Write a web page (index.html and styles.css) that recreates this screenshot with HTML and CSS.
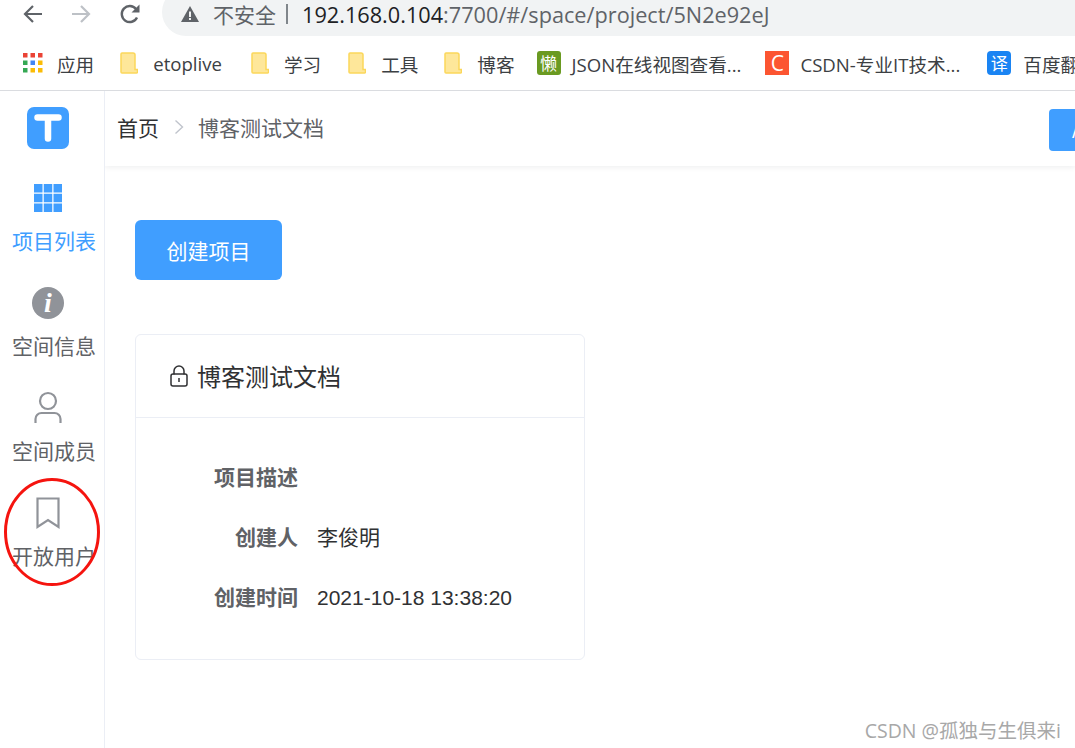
FILE: index.html
```html
<!DOCTYPE html>
<html lang="zh">
<head>
<meta charset="utf-8">
<title>博客测试文档</title>
<link rel="stylesheet" href="styles.css">
</head>
<body>
<div class="chrome">
  <div class="toolbar">
    <svg class="nav nav-back" viewBox="0 0 20 20"><path d="M19 10H2.500M10 2 2 10l8 8" fill="none" stroke="#5f6368" stroke-width="2.200"/></svg>
    <svg class="nav nav-fwd" viewBox="0 0 20 20"><path d="M1 10h16.500M10 2l8 8-8 8" fill="none" stroke="#bdc1c6" stroke-width="2.200"/></svg>
    <svg class="nav nav-reload" viewBox="0 0 22 22"><path d="M18 14.500A8 8 0 1 1 17 6" fill="none" stroke="#5f6368" stroke-width="2.400"/><path d="M20.500 1.500v8h-8z" fill="#5f6368"/></svg>
    <div class="omnibox">
      <svg class="warn" viewBox="0 0 18 16"><path d="M9 0l9 16H0z" fill="#5f6368"/><path d="M8 5.500h2v5.500H8zM8 12h2v2H8z" fill="#f1f3f4"/></svg>
      <span class="insecure">不安全</span>
      <span class="sep"></span>
      <span class="url"><span class="host">192.168.0.104</span>:7700/#/space/project/5N2e92eJ</span>
    </div>
  </div>
  <div class="bookmarks">
    <div class="bm">
      <svg class="apps" viewBox="0 0 20 20">
        <rect x="0" y="0" width="4.500" height="4.500" fill="#ea4335"/><rect x="7.500" y="0" width="4.500" height="4.500" fill="#ea4335"/><rect x="15" y="0" width="4.500" height="4.500" fill="#ea4335"/>
        <rect x="0" y="7.500" width="4.500" height="4.500" fill="#34a853"/><rect x="7.500" y="7.500" width="4.500" height="4.500" fill="#4285f4"/><rect x="15" y="7.500" width="4.500" height="4.500" fill="#fbbc05"/>
        <rect x="0" y="15" width="4.500" height="4.500" fill="#34a853"/><rect x="7.500" y="15" width="4.500" height="4.500" fill="#fbbc05"/><rect x="15" y="15" width="4.500" height="4.500" fill="#fbbc05"/>
      </svg>
      <span>应用</span>
    </div>
    <div class="bm gap-26"><svg class="folder" viewBox="0 0 18 22"><path d="M2 1h11a2 2 0 0 1 2 2v14.500h2.500V20a1 1 0 0 1-1 1H2a1 1 0 0 1-1-1V2a1 1 0 0 1 1-1z" fill="#fee79a" stroke="#fbd75b" stroke-width="1.500"/></svg><span>etoplive</span></div>
    <div class="bm gap-29"><svg class="folder" viewBox="0 0 18 22"><path d="M2 1h11a2 2 0 0 1 2 2v14.500h2.500V20a1 1 0 0 1-1 1H2a1 1 0 0 1-1-1V2a1 1 0 0 1 1-1z" fill="#fee79a" stroke="#fbd75b" stroke-width="1.500"/></svg><span>学习</span></div>
    <div class="bm gap-27"><svg class="folder" viewBox="0 0 18 22"><path d="M2 1h11a2 2 0 0 1 2 2v14.500h2.500V20a1 1 0 0 1-1 1H2a1 1 0 0 1-1-1V2a1 1 0 0 1 1-1z" fill="#fee79a" stroke="#fbd75b" stroke-width="1.500"/></svg><span>工具</span></div>
    <div class="bm gap-26"><svg class="folder" viewBox="0 0 18 22"><path d="M2 1h11a2 2 0 0 1 2 2v14.500h2.500V20a1 1 0 0 1-1 1H2a1 1 0 0 1-1-1V2a1 1 0 0 1 1-1z" fill="#fee79a" stroke="#fbd75b" stroke-width="1.500"/></svg><span>博客</span></div>
    <div class="bm gap-22"><span class="fav fav-lan">懒</span><span>JSON在线视图查看...</span></div>
    <div class="bm gap-24"><span class="fav fav-c">C</span><span>CSDN-专业IT技术...</span></div>
    <div class="bm gap-27"><span class="fav fav-yi">译</span><span>百度翻译</span></div>
  </div>
</div>

<div class="app">
  <aside class="sidebar">
    <div class="logo"><svg viewBox="0 0 42 42"><path d="M10.500 10.500h21M21 10.500v21" fill="none" stroke="#fff" stroke-width="6.500" stroke-linecap="round"/></svg></div>
    <nav class="menu">
      <a class="item active">
        <svg class="icon" viewBox="0 0 28 28" fill="#409eff"><path d="M0 0h8.500v8.500H0zM9.750 0h8.500v8.500h-8.500zM19.500 0H28v8.500h-8.500zM0 9.750h8.500v8.500H0zM9.750 9.750h8.500v8.500h-8.500zM19.500 9.750H28v8.500h-8.500zM0 19.500h8.500V28H0zM9.750 19.500h8.500V28h-8.500zM19.500 19.500H28V28h-8.500z"/></svg>
        <span>项目列表</span>
      </a>
      <a class="item">
        <svg class="icon icon-info" viewBox="0 0 32 32"><circle cx="16" cy="16" r="16" fill="#909399"/><text x="16" y="25" text-anchor="middle" class="info-i">i</text></svg>
        <span>空间信息</span>
      </a>
      <a class="item">
        <svg class="icon icon-user" viewBox="0 0 28 32" fill="none" stroke="#909399" stroke-width="2.200"><circle cx="14" cy="9" r="8"/><path d="M1.500 31v-4a6 6 0 0 1 6-6h13a6 6 0 0 1 6 6v4"/></svg>
        <span>空间成员</span>
      </a>
      <a class="item">
        <svg class="icon icon-mark" viewBox="0 0 24 32"><path d="M1.500 1.500h21v28.500L12 23 1.500 30z" fill="none" stroke="#909399" stroke-width="2.200"/></svg>
        <span>开放用户</span>
      </a>
    </nav>
  </aside>
  <div class="main">
    <header class="topbar">
      <div class="crumbs">
        <span class="crumb-home">首页</span>
        <svg class="chev" viewBox="0 0 10 16"><path d="M1.500 1.500 8.500 8l-7 6.500" fill="none" stroke="#c0c4cc" stroke-width="1.400"/></svg>
        <span class="crumb-cur">博客测试文档</span>
      </div>
      <button class="api-btn">API</button>
    </header>
    <section class="content">
      <button class="create-btn">创建项目</button>
      <div class="card">
        <div class="card-head">
          <svg class="lock" viewBox="0 0 18 22" fill="none" stroke="#303133" stroke-width="1.500"><path d="M4 9.500V6a5 5 0 0 1 10 0v3.500"/><rect x="1" y="9" width="16" height="12" rx="2"/><path d="M9 13v4"/></svg>
          <span class="card-title">博客测试文档</span>
        </div>
        <div class="card-body">
          <div class="row"><span class="label">项目描述</span><span class="value"></span></div>
          <div class="row"><span class="label">创建人</span><span class="value value-cjk">李俊明</span></div>
          <div class="row"><span class="label">创建时间</span><span class="value">2021-10-18 13:38:20</span></div>
        </div>
      </div>
    </section>
  </div>
</div>

<svg class="annotation" viewBox="0 0 100 110"><ellipse cx="50" cy="55" rx="46.500" ry="52.500" fill="none" stroke="#f5140f" stroke-width="3"/></svg>
<div class="watermark">CSDN @孤独与生俱来i</div>
</body>
</html>
```
FILE: styles.css
```css
* { box-sizing: border-box; }
html, body { margin: 0; height: 748px; overflow: hidden; background: #fff; }
body { font-family: "Liberation Sans", "Noto Sans CJK SC", sans-serif; position: relative; color: #303133; }

.chrome { height: 91px; border-bottom: 1px solid #dadce0; background: #fff; font-family: "Open Sans", "Noto Sans CJK SC", sans-serif; }
.toolbar { height: 36px; display: flex; align-items: center; overflow: hidden; padding-left: 23px; }
.nav { width: 20px; height: 20px; flex: none; margin-top: -8px; }
.nav-fwd { margin-left: 28px; }
.nav-reload { margin-left: 28px; width: 22px; height: 22px; }
.omnibox { flex: none; width: 960px; height: 48px; margin: -12px 0 0 21px; padding: 4px 0 0 19px; border-radius: 24px; background: #f1f3f4; display: flex; align-items: center; font-size: 21.7px; }
.warn { width: 18px; height: 16px; flex: none; }
.insecure { margin-left: 14px; font-size: 21px; color: #5f6368; }
.sep { width: 2px; height: 20px; margin: 0 14px 0 10px; background: #80868b; }
.url { color: #5f6368; white-space: nowrap; }
.host { color: #202124; }

.bookmarks { height: 54px; display: flex; align-items: center; padding: 0 0 0 23px; white-space: nowrap; font-size: 18.6px; color: #3c4043; overflow: hidden; }
.bm { display: flex; align-items: center; flex: none; }
.apps { width: 20px; height: 20px; margin-right: 14px; }
.folder { width: 18px; height: 22px; margin-right: 15px; }
.fav { width: 24px; height: 24px; flex: none; margin-right: 11px; display: flex; align-items: center; justify-content: center; color: #fff; font-size: 17px; line-height: 1; }
.fav-lan { background: #6a9a21; border-radius: 3px; }
.fav-c { background: #fc5531; font-size: 21px; }
.fav-yi { background: #1a84f3; border-radius: 4px; margin-right: 12px; }
.gap-22 { margin-left: 22px; }
.gap-24 { margin-left: 24px; }
.gap-26 { margin-left: 26px; }
.gap-27 { margin-left: 27px; }
.gap-29 { margin-left: 29px; }

.app { display: flex; height: 657px; }
.sidebar { width: 105px; flex: none; border-right: 1px solid #ebeef5; padding-top: 16px; display: flex; flex-direction: column; align-items: center; }
.logo { width: 42px; height: 42px; margin-right: 8px; background: #409eff; border-radius: 7px; flex: none; }
.logo svg { display: block; width: 42px; height: 42px; }
.menu { margin-top: 31px; display: flex; flex-direction: column; align-items: center; font-family: "Noto Sans CJK SC", sans-serif; }
.item { height: 105px; display: flex; flex-direction: column; align-items: center; font-size: 21px; line-height: 30px; color: #606266; }
.item.active { color: #409eff; }
.item span { margin: 9px 0 0 4px; white-space: nowrap; }
.icon { width: 28px; height: 36px; flex: none; margin-right: 8px; }
.icon-info { width: 32px; }
.icon-user { width: 28px; }
.icon-mark { width: 24px; }
.info-i { fill: #fff; font-family: "Liberation Serif", serif; font-style: italic; font-weight: 700; font-size: 28px; }

.main { flex: 1; min-width: 0; overflow: hidden; }
.topbar { height: 75px; display: flex; align-items: center; justify-content: space-between; padding-left: 12px; box-shadow: 0 1px 6px rgba(0, 21, 41, .08); font-family: "Noto Sans CJK SC", sans-serif; }
.crumbs { display: flex; align-items: center; font-size: 21px; margin-bottom: 4px; }
.crumb-home { color: #303133; }
.chev { width: 10px; height: 16px; margin: 0 14px 0 15px; }
.crumb-cur { color: #606266; }
.api-btn { width: 80px; height: 42px; margin: 2px -54px 0 0; flex: none; border: 0; border-radius: 4px; background: #409eff; color: #fff; font-size: 18px; text-align: left; padding: 0 0 0 23px; font-family: inherit; }

.content { padding: 54px 0 0 30px; }
.create-btn { display: block; width: 147px; height: 60px; border: 0; border-radius: 6px; background: #409eff; color: #fff; font-size: 21px; font-family: "Noto Sans CJK SC", sans-serif; padding: 0; }
.card { margin-top: 54px; width: 450px; height: 326px; border: 1px solid #ebeef5; border-radius: 6px; background: #fff; }
.card-head { height: 83px; border-bottom: 1px solid #ebeef5; display: flex; align-items: center; padding-left: 34px; font-size: 24px; font-family: "Noto Sans CJK SC", sans-serif; color: #303133; }
.card-title { margin-bottom: 2px; }
.lock { width: 18px; height: 22px; margin-right: 9px; flex: none; }
.card-body { padding-top: 30px; }
.row { height: 60px; display: flex; align-items: center; font-size: 21px; }
.label { width: 162px; margin-bottom: 4px; text-align: right; font-weight: 700; color: #606266; font-family: "Noto Sans CJK SC", sans-serif; flex: none; }
.value { margin-left: 19px; color: #303133; font-family: "Liberation Sans", "Noto Sans CJK SC", sans-serif; }
.value-cjk { margin-bottom: 4px; }

.annotation { position: absolute; left: 2px; top: 477px; width: 100px; height: 110px; }
.watermark { position: absolute; right: 14px; top: 715px; font-size: 19.5px; color: #a8a8a8; font-family: "Open Sans", "Noto Sans CJK SC", sans-serif; white-space: nowrap; }
```
